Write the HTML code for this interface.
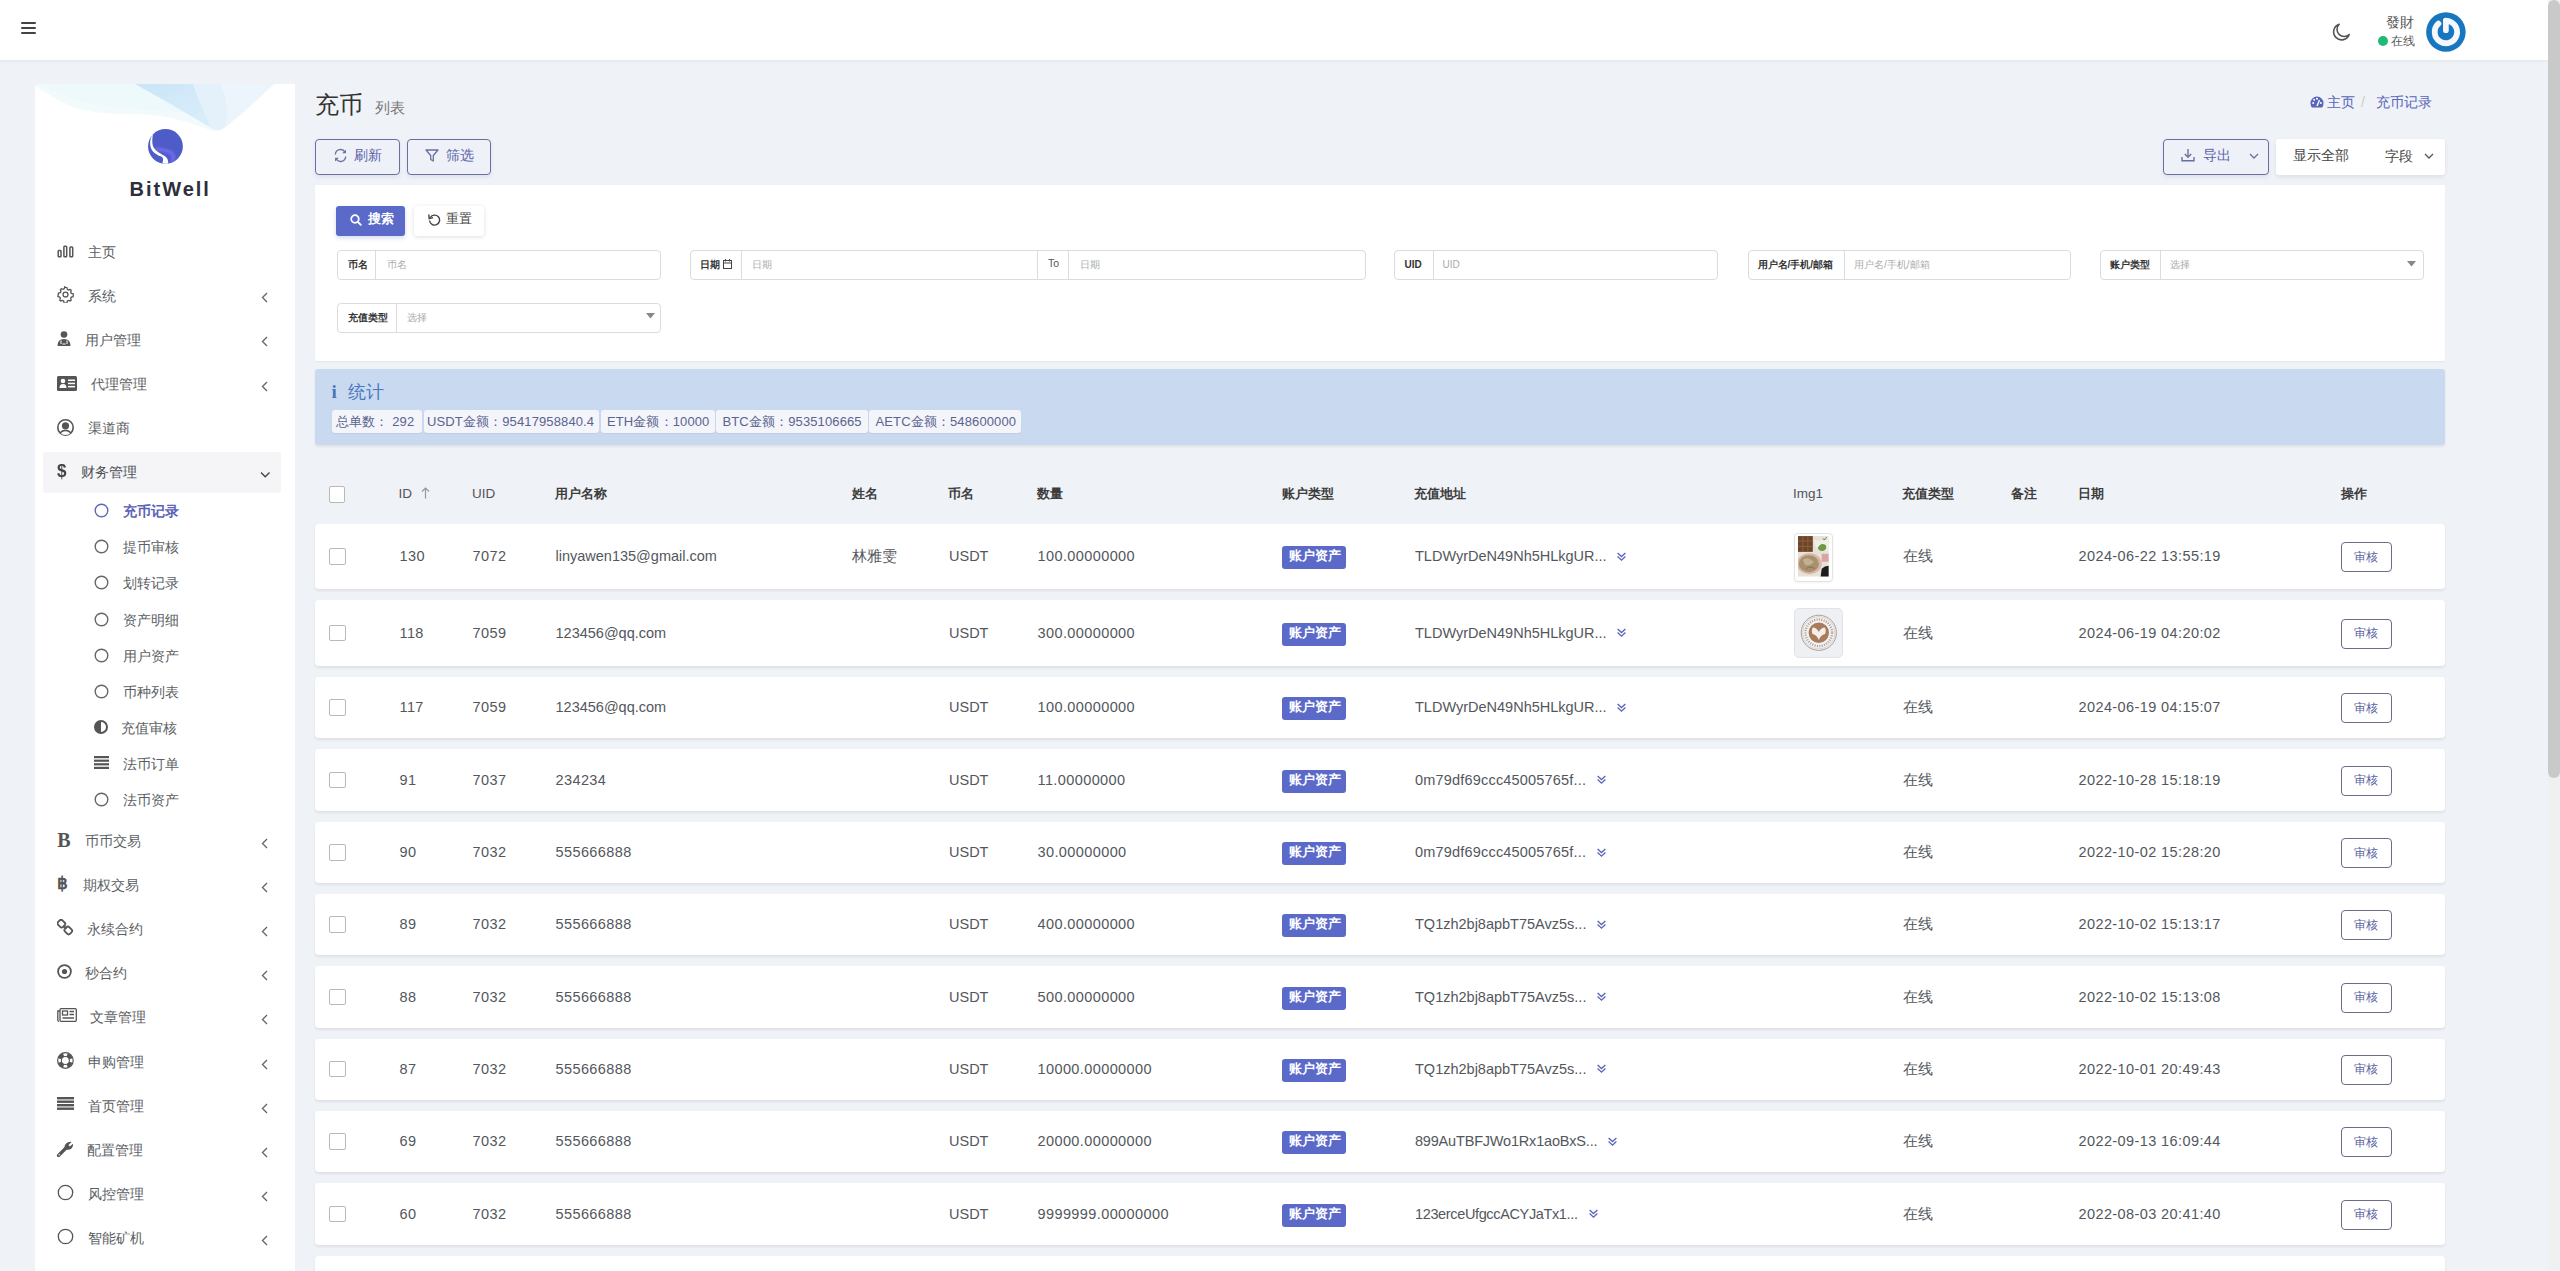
<!DOCTYPE html>
<html><head><meta charset="utf-8">
<style>
*{box-sizing:border-box;margin:0;padding:0}
html,body{width:2560px;height:1271px;overflow:hidden}
body{background:#eff2f7;font-family:"Liberation Sans",sans-serif;font-size:14px;color:#4b5057;position:relative}
.a{position:absolute;white-space:nowrap}
.nav{position:absolute;left:0;top:0;width:2548px;height:60px;background:#fff;box-shadow:0 1px 4px rgba(0,0,0,.06)}
.scroll{position:absolute;left:2548px;top:0;width:12px;height:1271px;background:#eff0ef}
.thumb{position:absolute;left:2548px;top:0;width:11.5px;height:778px;background:#c8c9c8;border-radius:6px}
.side{position:absolute;left:35px;top:84px;width:260px;height:1200px;background:#fff}
.mi{position:absolute;left:0;width:260px;height:20px;line-height:20px;font-size:14px;color:#5a5e63}
.mi .t{position:absolute;top:0}
.mi .ic{position:absolute;top:2px}
.chev{position:absolute;left:225px;top:5px;width:8px;height:8px;border-left:1.5px solid #666;border-bottom:1.5px solid #666;transform:rotate(45deg)}
</style></head><body>
<div class="nav"></div>
<div class="scroll"></div><div class="thumb"></div>
<!-- hamburger -->
<div class="a" style="left:21px;top:22px;width:15px;height:2px;background:#444;border-radius:1px"></div>
<div class="a" style="left:21px;top:27px;width:15px;height:2px;background:#444;border-radius:1px"></div>
<div class="a" style="left:21px;top:32px;width:15px;height:2px;background:#444;border-radius:1px"></div>

<div class="side"></div>
<svg class="a" style="left:35px;top:84px" width="260" height="50" viewBox="0 0 260 50">
<defs><linearGradient id="wb" x1="0" y1="0" x2="1" y2="1"><stop offset="0" stop-color="#c9e5f7"/><stop offset="1" stop-color="#dceefa"/></linearGradient></defs>
<path d="M0 0 L240 0 L188 45 Q180 48.5 172 45 Q135 30 95 30 Q55 30 35 22 Q12 10 0 2Z" fill="#f3fafc"/>
<path d="M4 0 L100 0 Q120 14 150 28 Q110 26 70 22 Q35 16 4 0Z" fill="#eaf7fa" opacity=".5"/>
<path d="M100 0 L158 0 Q166 22 177 44.5 Q140 22 100 0Z" fill="url(#wb)"/>
<path d="M158 0 L238 0 Q215 24 188 44.8 Q181 48 177 44.5 Q166 22 158 0Z" fill="#e4f1fa"/>
<path d="M185 0 L238 0 Q215 24 190 43 Q196 20 185 0Z" fill="#edf6fb" opacity=".8"/>
</svg>
<svg class="a" style="left:148px;top:129px" width="35" height="35" viewBox="0 0 35 35"><defs><filter id="lb" x="-50%" y="-50%" width="200%" height="200%"><feGaussianBlur stdDeviation=".9"/></filter><clipPath id="lc"><circle cx="17.45" cy="17.45" r="17.4"/></clipPath></defs><circle cx="17.45" cy="17.45" r="17.4" fill="#4d5cc6"/><g clip-path="url(#lc)"><path d="M8 19.5 Q15 21 21 22.5 Q25 24 25.5 28 Q25.5 31 24 34" fill="none" stroke="#6f6ae8" stroke-width="3.6" filter="url(#lb)"/><path d="M5.4 3.4 C2.4 8 1.6 13 2.5 17.5 C3.6 22.5 8 25.8 12.6 27.3 C14.6 28 15.4 29.6 15 31.2 L14.2 36 L20 36 C20.6 32.5 20 29.2 16.8 27 C11.5 24 6.4 21.6 4.8 16.5 C3.9 12.5 4.2 7.6 5.4 3.4Z" fill="#fff"/></g></svg>
<div class="a" style="left:129.5px;top:177.5px;font-size:20px;font-weight:bold;color:#2d2f3a;letter-spacing:2px">BitWell</div>
<svg class="a" style="left:57px;top:245px" width="17" height="13" viewBox="0 0 17 13"><g fill="none" stroke="#555" stroke-width="1.5"><rect x="1.2" y="5.5" width="2.8" height="6.3" rx=".8"/><rect x="6.9" y="1.3" width="2.8" height="10.5" rx=".8"/><rect x="12.9" y="2" width="2.8" height="9.8" rx=".8"/></g></svg>
<svg class="a" style="left:57px;top:286px" width="17" height="17" viewBox="0 0 24 24"><path fill="none" stroke="#555" stroke-width="1.8" d="M12 1.8l2 .3.6 2.6 1.6.9 2.5-.8 1.4 1.5-.8 2.5.9 1.6 2.6.6.3 2-.3 2-2.6.6-.9 1.6.8 2.5-1.4 1.4-2.5-.8-1.6.9-.6 2.6-2 .3-2-.3-.6-2.6-1.6-.9-2.5.8-1.4-1.4.8-2.5-.9-1.6-2.6-.6L1.8 12l.3-2 2.6-.6.9-1.6-.8-2.5 1.4-1.5 2.5.8 1.6-.9.6-2.6z"/><circle cx="12" cy="12" r="3.5" fill="none" stroke="#555" stroke-width="1.8"/></svg>
<svg class="a" style="left:57px;top:331px" width="14" height="15" viewBox="0 0 14 15"><circle cx="7" cy="3.5" r="3.3" fill="#555"/><path d="M0.5 15 Q0.5 8 7 8 Q13.5 8 13.5 15Z" fill="#555"/><path d="M4 9.5 L4 13 M10 9.5 L10 13 M5.5 13 L8.5 13" stroke="#fff" stroke-width="1" fill="none"/></svg>
<svg class="a" style="left:57px;top:376px" width="20" height="15" viewBox="0 0 20 15"><rect x="0" y="0" width="20" height="15" rx="1.5" fill="#555"/><circle cx="6" cy="5" r="2.3" fill="#fff"/><path d="M2.5 12 Q2.5 8 6 8 Q9.5 8 9.5 12Z" fill="#fff"/><rect x="11" y="3.5" width="7" height="1.5" fill="#fff"/><rect x="11" y="6.7" width="7" height="1.5" fill="#fff"/><rect x="11" y="9.9" width="7" height="1.5" fill="#fff"/></svg>
<svg class="a" style="left:57px;top:419px" width="17" height="17" viewBox="0 0 17 17"><defs><clipPath id="uc"><circle cx="8.5" cy="8.5" r="7.6"/></clipPath></defs><circle cx="8.5" cy="8.5" r="7.7" fill="none" stroke="#555" stroke-width="1.6"/><g clip-path="url(#uc)"><circle cx="8.5" cy="6.8" r="3.6" fill="#555"/><path d="M1.5 17 Q2.5 10.8 8.5 10.8 Q14.5 10.8 15.5 17Z" fill="#555"/><path d="M3 17 Q4 12.3 8.5 12.3 Q13 12.3 14 17Z" fill="#fff"/></g></svg>
<div class="a" style="left:88px;top:243px;font-size:14px;line-height:18px;color:#5a5e63;">主页</div>
<div class="a" style="left:88px;top:287px;font-size:14px;line-height:18px;color:#5a5e63;">系统</div>
<svg class="a" style="left:259.8px;top:292.2px" width="10" height="11" viewBox="0 0 10 11"><path d="M7 1 L2.5 5.5 L7 10" fill="none" stroke="#666" stroke-width="1.35"/></svg>
<div class="a" style="left:85px;top:331px;font-size:14px;line-height:18px;color:#5a5e63;">用户管理</div>
<svg class="a" style="left:259.8px;top:336.2px" width="10" height="11" viewBox="0 0 10 11"><path d="M7 1 L2.5 5.5 L7 10" fill="none" stroke="#666" stroke-width="1.35"/></svg>
<div class="a" style="left:91px;top:375px;font-size:14px;line-height:18px;color:#5a5e63;">代理管理</div>
<svg class="a" style="left:259.8px;top:381.2px" width="10" height="11" viewBox="0 0 10 11"><path d="M7 1 L2.5 5.5 L7 10" fill="none" stroke="#666" stroke-width="1.35"/></svg>
<div class="a" style="left:88px;top:419px;font-size:14px;line-height:18px;color:#5a5e63;">渠道商</div>
<div class="a" style="left:43px;top:452px;width:238px;height:41px;background:#f5f5f8;border-radius:3px"></div>
<div class="a" style="left:57px;top:459.5px;font-size:19px;font-weight:bold;color:#444;line-height:22px;transform:scaleX(.9);transform-origin:left">$</div>
<div class="a" style="left:81px;top:463px;font-size:14px;line-height:18px;color:#5a5e63;;color:#4a4e53">财务管理</div>
<svg class="a" style="left:259.5px;top:470.5px" width="11" height="8" viewBox="0 0 11 8"><path d="M1 1.5 L5.25 5.75 L9.5 1.5" fill="none" stroke="#444" stroke-width="1.4"/></svg>
<svg class="a" style="left:94px;top:503px" width="15" height="15" viewBox="0 0 15 15"><circle cx="7.5" cy="7.5" r="6.3" fill="none" stroke="#6068b8" stroke-width="1.4"/></svg>
<div class="a" style="left:123px;top:502px;font-size:14px;line-height:18px;color:#5a5e63;;color:#5a63b5;font-weight:bold">充币记录</div>
<svg class="a" style="left:94px;top:539px" width="15" height="15" viewBox="0 0 15 15"><circle cx="7.5" cy="7.5" r="6.3" fill="none" stroke="#666" stroke-width="1.4"/></svg>
<div class="a" style="left:123px;top:538px;font-size:14px;line-height:18px;color:#5a5e63;">提币审核</div>
<svg class="a" style="left:94px;top:575px" width="15" height="15" viewBox="0 0 15 15"><circle cx="7.5" cy="7.5" r="6.3" fill="none" stroke="#666" stroke-width="1.4"/></svg>
<div class="a" style="left:123px;top:574px;font-size:14px;line-height:18px;color:#5a5e63;">划转记录</div>
<svg class="a" style="left:94px;top:612px" width="15" height="15" viewBox="0 0 15 15"><circle cx="7.5" cy="7.5" r="6.3" fill="none" stroke="#666" stroke-width="1.4"/></svg>
<div class="a" style="left:123px;top:611px;font-size:14px;line-height:18px;color:#5a5e63;">资产明细</div>
<svg class="a" style="left:94px;top:648px" width="15" height="15" viewBox="0 0 15 15"><circle cx="7.5" cy="7.5" r="6.3" fill="none" stroke="#666" stroke-width="1.4"/></svg>
<div class="a" style="left:123px;top:647px;font-size:14px;line-height:18px;color:#5a5e63;">用户资产</div>
<svg class="a" style="left:94px;top:684px" width="15" height="15" viewBox="0 0 15 15"><circle cx="7.5" cy="7.5" r="6.3" fill="none" stroke="#666" stroke-width="1.4"/></svg>
<div class="a" style="left:123px;top:683px;font-size:14px;line-height:18px;color:#5a5e63;">币种列表</div>
<svg class="a" style="left:94px;top:720px" width="14" height="14" viewBox="0 0 14 14"><circle cx="7" cy="7" r="6" fill="none" stroke="#555" stroke-width="2"/><path d="M7 1 A6 6 0 0 0 7 13Z" fill="#555"/></svg>
<div class="a" style="left:121px;top:719px;font-size:14px;line-height:18px;color:#5a5e63;">充值审核</div>
<svg class="a" style="left:94px;top:756px" width="15" height="13" viewBox="0 0 15 13"><g fill="#555"><rect y="0" width="15" height="2.2"/><rect y="3.6" width="15" height="2.2"/><rect y="7.2" width="15" height="2.2"/><rect y="10.8" width="15" height="2.2"/></g></svg>
<div class="a" style="left:123px;top:755px;font-size:14px;line-height:18px;color:#5a5e63;">法币订单</div>
<svg class="a" style="left:94px;top:792px" width="15" height="15" viewBox="0 0 15 15"><circle cx="7.5" cy="7.5" r="6.3" fill="none" stroke="#666" stroke-width="1.4"/></svg>
<div class="a" style="left:123px;top:791px;font-size:14px;line-height:18px;color:#5a5e63;">法币资产</div>
<div class="a" style="left:85px;top:832px;font-size:14px;line-height:18px;color:#5a5e63;">币币交易</div>
<svg class="a" style="left:259.8px;top:838.2px" width="10" height="11" viewBox="0 0 10 11"><path d="M7 1 L2.5 5.5 L7 10" fill="none" stroke="#666" stroke-width="1.35"/></svg>
<div class="a" style="left:57.3px;top:829px;font-family:'Liberation Serif',serif;font-size:20px;font-weight:bold;color:#555;line-height:22px">B</div>
<div class="a" style="left:83px;top:876px;font-size:14px;line-height:18px;color:#5a5e63;">期权交易</div>
<svg class="a" style="left:259.8px;top:882.2px" width="10" height="11" viewBox="0 0 10 11"><path d="M7 1 L2.5 5.5 L7 10" fill="none" stroke="#666" stroke-width="1.35"/></svg>
<div class="a" style="left:57px;top:874px;font-size:17px;font-weight:bold;color:#555;line-height:20px">&#3647;</div>
<div class="a" style="left:87px;top:920px;font-size:14px;line-height:18px;color:#5a5e63;">永续合约</div>
<svg class="a" style="left:259.8px;top:926.2px" width="10" height="11" viewBox="0 0 10 11"><path d="M7 1 L2.5 5.5 L7 10" fill="none" stroke="#666" stroke-width="1.35"/></svg>
<svg class="a" style="left:57px;top:919px" width="17" height="17" viewBox="0 0 17 17"><g fill="none" stroke="#555" stroke-width="1.8"><rect x="-3.6" y="-3.1" width="7.2" height="6.2" rx="2.2" transform="translate(4.4 4.7) rotate(45)"/><rect x="-3.6" y="-3.1" width="7.2" height="6.2" rx="2.2" transform="translate(11.3 11.5) rotate(45)"/><path d="M6.2 6.5 L9.5 9.7"/></g></svg>
<div class="a" style="left:85px;top:964px;font-size:14px;line-height:18px;color:#5a5e63;">秒合约</div>
<svg class="a" style="left:259.8px;top:970.2px" width="10" height="11" viewBox="0 0 10 11"><path d="M7 1 L2.5 5.5 L7 10" fill="none" stroke="#666" stroke-width="1.35"/></svg>
<svg class="a" style="left:57px;top:964px" width="15" height="15" viewBox="0 0 15 15"><circle cx="7.5" cy="7.5" r="6.4" fill="none" stroke="#555" stroke-width="1.8"/><circle cx="7.5" cy="7.5" r="2.6" fill="#555"/></svg>
<div class="a" style="left:90px;top:1008px;font-size:14px;line-height:18px;color:#5a5e63;">文章管理</div>
<svg class="a" style="left:259.8px;top:1014.2px" width="10" height="11" viewBox="0 0 10 11"><path d="M7 1 L2.5 5.5 L7 10" fill="none" stroke="#666" stroke-width="1.35"/></svg>
<svg class="a" style="left:57px;top:1008px" width="20" height="14" viewBox="0 0 20 14"><g fill="none" stroke="#555" stroke-width="1.3"><rect x="3" y="0.7" width="16.3" height="12.6" rx="1"/><path d="M3 3 L0.8 3 L0.8 12 Q0.8 13.3 2 13.3"/><rect x="5.5" y="3" width="5" height="4"/><path d="M12.5 3.5h4.5M12.5 6.5h4.5M5.5 10h11.5"/></g></svg>
<div class="a" style="left:88px;top:1053px;font-size:14px;line-height:18px;color:#5a5e63;">申购管理</div>
<svg class="a" style="left:259.8px;top:1059.2px" width="10" height="11" viewBox="0 0 10 11"><path d="M7 1 L2.5 5.5 L7 10" fill="none" stroke="#666" stroke-width="1.35"/></svg>
<svg class="a" style="left:57px;top:1052px" width="17" height="17" viewBox="0 0 17 17"><g fill="none" stroke="#555"><circle cx="8.4" cy="8.5" r="7.8" stroke-width="1.2"/><circle cx="8.4" cy="8.5" r="4.0" stroke-width="1.1"/></g><path d="M15.63 10.85 A7.6 7.6 0 0 1 10.75 15.73 L9.64 12.30 A4.0 4.0 0 0 0 12.20 9.74Z M6.05 15.73 A7.6 7.6 0 0 1 1.17 10.85 L4.60 9.74 A4.0 4.0 0 0 0 7.16 12.30Z M1.17 6.15 A7.6 7.6 0 0 1 6.05 1.27 L7.16 4.70 A4.0 4.0 0 0 0 4.60 7.26Z M10.75 1.27 A7.6 7.6 0 0 1 15.63 6.15 L12.20 7.26 A4.0 4.0 0 0 0 9.64 4.70Z " fill="#555"/></svg>
<div class="a" style="left:88px;top:1097px;font-size:14px;line-height:18px;color:#5a5e63;">首页管理</div>
<svg class="a" style="left:259.8px;top:1103.2px" width="10" height="11" viewBox="0 0 10 11"><path d="M7 1 L2.5 5.5 L7 10" fill="none" stroke="#666" stroke-width="1.35"/></svg>
<svg class="a" style="left:57px;top:1097px" width="17" height="13" viewBox="0 0 17 13"><g fill="#555"><rect y="0" width="17" height="2.4"/><rect y="3.5" width="17" height="2.4"/><rect y="7" width="17" height="2.4"/><rect y="10.5" width="17" height="2.4"/></g></svg>
<div class="a" style="left:87px;top:1141px;font-size:14px;line-height:18px;color:#5a5e63;">配置管理</div>
<svg class="a" style="left:259.8px;top:1147.2px" width="10" height="11" viewBox="0 0 10 11"><path d="M7 1 L2.5 5.5 L7 10" fill="none" stroke="#666" stroke-width="1.35"/></svg>
<svg class="a" style="left:57px;top:1141px" width="17" height="16" viewBox="0 0 17 16"><path d="M1.5 14.5 L9 7" stroke="#555" stroke-width="3.2" stroke-linecap="round"/><path d="M8 8 Q6.5 3.5 10.5 1.5 Q13 0.5 14.5 1 L11.5 4 L12.8 5.5 L16 2.8 Q16.6 5.5 14.5 7.5 Q12 9.5 9.5 8.5Z" fill="#555"/><circle cx="2.2" cy="13.8" r=".7" fill="#fff"/></svg>
<div class="a" style="left:88px;top:1185px;font-size:14px;line-height:18px;color:#5a5e63;">风控管理</div>
<svg class="a" style="left:259.8px;top:1191.2px" width="10" height="11" viewBox="0 0 10 11"><path d="M7 1 L2.5 5.5 L7 10" fill="none" stroke="#666" stroke-width="1.35"/></svg>
<svg class="a" style="left:57px;top:1184px" width="17" height="17" viewBox="0 0 17 17"><circle cx="8.5" cy="8.5" r="7.2" fill="none" stroke="#555" stroke-width="1.3"/></svg>
<div class="a" style="left:88px;top:1229px;font-size:14px;line-height:18px;color:#5a5e63;">智能矿机</div>
<svg class="a" style="left:259.8px;top:1235.2px" width="10" height="11" viewBox="0 0 10 11"><path d="M7 1 L2.5 5.5 L7 10" fill="none" stroke="#666" stroke-width="1.35"/></svg>
<svg class="a" style="left:57px;top:1228px" width="17" height="17" viewBox="0 0 17 17"><circle cx="8.5" cy="8.5" r="7.2" fill="none" stroke="#555" stroke-width="1.3"/></svg>
<svg class="a" style="left:2331px;top:22px" width="20" height="20" viewBox="0 0 20 20"><path d="M8.2 2.2 A8 8 0 1 0 18.2 12.5 A6.6 6.6 0 0 1 8.2 2.2Z" fill="none" stroke="#555" stroke-width="1.6" stroke-linejoin="round"/></svg>
<div class="a" style="left:2386px;top:13px;font-size:14px;line-height:18px;color:#555">發財</div>
<div class="a" style="left:2378px;top:35.6px;width:10px;height:10px;border-radius:50%;background:#21b978"></div>
<div class="a" style="left:2391px;top:32.5px;font-size:12px;line-height:16px;color:#555">在线</div>
<svg class="a" style="left:2426px;top:12px" width="40" height="40" viewBox="0 0 40 40"><circle cx="19.9" cy="20" r="19.75" fill="#1776bd"/><path d="M12.41 11.68 A11.2 11.2 0 1 0 19.90 8.80" fill="none" stroke="#f4f8fc" stroke-width="5.8" stroke-linecap="round"/><path d="M19.9 8.5 L19.9 18.2" stroke="#f4f8fc" stroke-width="5.7" stroke-linecap="round"/></svg>
<div class="a" style="left:315px;top:90px;font-size:23.5px;line-height:30px;color:#333">充币</div>
<div class="a" style="left:375px;top:98px;font-size:15px;line-height:20px;color:#777">列表</div>
<svg class="a" style="left:2310px;top:96px" width="14" height="12" viewBox="0 0 14 12"><path d="M7 0.5 A6.5 6.5 0 0 0 0.5 7 Q0.5 10 2 11.5 L12 11.5 Q13.5 10 13.5 7 A6.5 6.5 0 0 0 7 0.5Z" fill="#5865b8"/><circle cx="3.2" cy="7" r="1" fill="#fff"/><circle cx="4.2" cy="3.8" r="1" fill="#fff"/><circle cx="7" cy="2.8" r="1" fill="#fff"/><circle cx="10.8" cy="7" r="1" fill="#fff"/><path d="M7 10 L9.5 4" stroke="#fff" stroke-width="1.4"/></svg>
<div class="a" style="left:2327px;top:93px;font-size:14px;line-height:18px;color:#5865b8">主页</div>
<div class="a" style="left:2361px;top:93px;font-size:14px;line-height:18px;color:#ccc">/</div>
<div class="a" style="left:2376px;top:93px;font-size:14px;line-height:18px;color:#5865b8">充币记录</div>
<div class="a" style="left:315px;top:139px;width:85px;height:35.5px;border:1.4px solid #6a6f9e;border-radius:4px;background:#eef1f8;box-shadow:0 2px 4px rgba(88,101,184,.12)"></div><svg class="a" style="left:333px;top:148px" width="15" height="15" viewBox="0 0 16 16"><g fill="none" stroke="#6a6f9e" stroke-width="1.4"><path d="M2.5 7 A5.5 5.5 0 0 1 12.8 4.5"/><path d="M13.5 9 A5.5 5.5 0 0 1 3.2 11.5"/></g><path d="M13.8 1.5 L13.8 5.5 L9.8 5.5Z" fill="#6a6f9e"/><path d="M2.2 14.5 L2.2 10.5 L6.2 10.5Z" fill="#6a6f9e"/></svg><div class="a" style="left:354px;top:146px;font-size:14px;line-height:18px;color:#5b63a8">刷新</div>
<div class="a" style="left:407px;top:139px;width:84px;height:35.5px;border:1.4px solid #6a6f9e;border-radius:4px;background:#eef1f8;box-shadow:0 2px 4px rgba(88,101,184,.12)"></div><svg class="a" style="left:425px;top:149px" width="14" height="13" viewBox="0 0 14 13"><path d="M1 1 L13 1 L8.3 6.5 L8.3 12 L5.7 10.5 L5.7 6.5Z" fill="none" stroke="#6a6f9e" stroke-width="1.3" stroke-linejoin="round"/></svg><div class="a" style="left:446px;top:146px;font-size:14px;line-height:18px;color:#5b63a8">筛选</div>
<div class="a" style="left:2163px;top:139px;width:106px;height:35.5px;border:1.4px solid #6a6f9e;border-radius:4px;background:#eef1f8;box-shadow:0 2px 4px rgba(88,101,184,.12)"></div>
<svg class="a" style="left:2181px;top:148px" width="14" height="14" viewBox="0 0 14 14"><g fill="none" stroke="#6a6f9e" stroke-width="1.4"><path d="M7 1 L7 9"/><path d="M3.8 6 L7 9.2 L10.2 6"/><path d="M1 9 L1 12.8 L13 12.8 L13 9"/></g></svg>
<div class="a" style="left:2203px;top:146px;font-size:14px;line-height:18px;color:#5b63a8">导出</div>
<svg class="a" style="left:2249px;top:153px" width="10" height="7" viewBox="0 0 10 7"><path d="M1 1 L5 5 L9 1" fill="none" stroke="#6a6f9e" stroke-width="1.3"/></svg>
<div class="a" style="left:2276px;top:139px;width:169px;height:35.5px;background:#fff;border-radius:3px;box-shadow:0 2px 4px rgba(0,0,0,.08)"></div>
<div class="a" style="left:2293px;top:146px;font-size:14px;line-height:18px;color:#444">显示全部</div>
<div class="a" style="left:2385px;top:147px;font-size:14px;line-height:18px;color:#444">字段</div>
<svg class="a" style="left:2424px;top:153px" width="10" height="7" viewBox="0 0 10 7"><path d="M1 1 L5 5 L9 1" fill="none" stroke="#555" stroke-width="1.3"/></svg>
<div class="a" style="left:315px;top:184.5px;width:2130px;height:176px;background:#fff;border-radius:1px;box-shadow:0 1px 2px rgba(0,0,0,.05)"></div>
<div class="a" style="left:336px;top:206px;width:69px;height:30px;background:#5b6ac9;border-radius:3px;box-shadow:0 2px 4px rgba(91,106,201,.25)"></div>
<svg class="a" style="left:349.5px;top:213.5px" width="12" height="12" viewBox="0 0 12 12"><circle cx="5" cy="5" r="3.8" fill="none" stroke="#fff" stroke-width="1.7"/><path d="M7.8 7.8 L10.8 10.8" stroke="#fff" stroke-width="1.9" stroke-linecap="round"/></svg>
<div class="a" style="left:367.5px;top:211px;font-size:12.5px;line-height:17px;color:#fff;font-weight:bold">搜索</div>
<div class="a" style="left:414px;top:206px;width:70px;height:30px;background:#fff;border-radius:3px;box-shadow:0 1px 4px rgba(0,0,0,.13)"></div>
<svg class="a" style="left:427.5px;top:213px" width="13" height="13" viewBox="0 0 13 13"><path d="M2.3 4.5 A5 5 0 1 1 1.6 7.5" fill="none" stroke="#444" stroke-width="1.4"/><path d="M0.8 1.5 L1.2 5.6 L5 4.6" fill="none" stroke="#444" stroke-width="1.4"/></svg>
<div class="a" style="left:446px;top:211px;font-size:12.5px;line-height:17px;color:#444">重置</div>
<div class="a" style="left:336.5px;top:250px;width:324.0px;height:30px;border:1px solid #dcdcdc;border-radius:4px;background:#fff"></div><div class="a" style="left:375px;top:250px;width:1px;height:30px;background:#dcdcdc"></div><div class="a" style="left:347.5px;top:257px;font-size:10px;line-height:16px;color:#333;font-weight:bold">币名</div><div class="a" style="left:387px;top:257px;font-size:10px;line-height:16px;color:#aaa">币名</div>
<div class="a" style="left:689.5px;top:250px;width:676.0px;height:30px;border:1px solid #dcdcdc;border-radius:4px;background:#fff"></div><div class="a" style="left:741px;top:250px;width:1px;height:30px;background:#dcdcdc"></div><div class="a" style="left:700px;top:257px;font-size:10px;line-height:16px;color:#333;font-weight:bold">日期</div><div class="a" style="left:752px;top:257px;font-size:10px;line-height:16px;color:#aaa">日期</div>
<svg class="a" style="left:722.5px;top:259px" width="9" height="10" viewBox="0 0 9 10"><g fill="none" stroke="#444" stroke-width="1"><rect x="0.5" y="1.5" width="8" height="8"/><path d="M0.5 4h8M2.5 0v2.5M6.5 0v2.5"/></g></svg>
<div class="a" style="left:1037px;top:250px;width:1px;height:30px;background:#dcdcdc"></div><div class="a" style="left:1068px;top:250px;width:1px;height:30px;background:#dcdcdc"></div>
<div class="a" style="left:1048px;top:256px;font-size:10.5px;line-height:14px;color:#555">To</div>
<div class="a" style="left:1080px;top:257px;font-size:10px;line-height:16px;color:#aaa">日期</div>
<div class="a" style="left:1394px;top:250px;width:324px;height:30px;border:1px solid #dcdcdc;border-radius:4px;background:#fff"></div><div class="a" style="left:1432.5px;top:250px;width:1px;height:30px;background:#dcdcdc"></div><div class="a" style="left:1404.5px;top:257px;font-size:10px;line-height:16px;color:#333;font-weight:bold">UID</div><div class="a" style="left:1442.5px;top:257px;font-size:10px;line-height:16px;color:#aaa">UID</div>
<div class="a" style="left:1747.5px;top:250px;width:323.0px;height:30px;border:1px solid #dcdcdc;border-radius:4px;background:#fff"></div><div class="a" style="left:1843.5px;top:250px;width:1px;height:30px;background:#dcdcdc"></div><div class="a" style="left:1757.5px;top:257px;font-size:10px;line-height:16px;color:#333;font-weight:bold">用户名/手机/邮箱</div><div class="a" style="left:1854px;top:257px;font-size:10px;line-height:16px;color:#aaa">用户名/手机/邮箱</div>
<div class="a" style="left:2099.5px;top:250px;width:324.0px;height:30px;border:1px solid #dcdcdc;border-radius:4px;background:#fff"></div><div class="a" style="left:2159.5px;top:250px;width:1px;height:30px;background:#dcdcdc"></div><div class="a" style="left:2110px;top:257px;font-size:10px;line-height:16px;color:#333;font-weight:bold">账户类型</div><div class="a" style="left:2170px;top:257px;font-size:10px;line-height:16px;color:#aaa">选择</div><svg class="a" style="left:2407px;top:260.5px" width="9" height="6" viewBox="0 0 9 6"><path d="M0 0 L9 0 L4.5 5.5Z" fill="#888"/></svg>
<div class="a" style="left:336.5px;top:302.5px;width:324.0px;height:30px;border:1px solid #dcdcdc;border-radius:4px;background:#fff"></div><div class="a" style="left:395.5px;top:302.5px;width:1px;height:30px;background:#dcdcdc"></div><div class="a" style="left:347.5px;top:309.5px;font-size:10px;line-height:16px;color:#333;font-weight:bold">充值类型</div><div class="a" style="left:406.5px;top:309.5px;font-size:10px;line-height:16px;color:#aaa">选择</div><svg class="a" style="left:645.5px;top:313px" width="9" height="6" viewBox="0 0 9 6"><path d="M0 0 L9 0 L4.5 5.5Z" fill="#888"/></svg>
<div class="a" style="left:315px;top:369px;width:2130px;height:76px;background:#c9daf0;border-radius:3px;box-shadow:0 2px 3px rgba(0,0,0,.07)"></div>
<div class="a" style="left:331.5px;top:382px;font-family:'Liberation Serif',serif;font-size:19px;line-height:20px;color:#4a74b8;font-weight:bold">i</div>
<div class="a" style="left:348px;top:380.5px;font-size:18px;line-height:22px;color:#4a78c0">统计</div>
<div class="a" style="left:332px;top:410px;width:90px;height:23px;background:#f3f5fa;border-radius:3px;box-shadow:0 1px 1px rgba(0,0,0,.06)"></div>
<div class="a" style="left:336px;top:413px;font-size:13px;line-height:17px;color:#5b6390;letter-spacing:.12px">总单数：&nbsp;292</div>
<div class="a" style="left:423.5px;top:410px;width:175.5px;height:23px;background:#f3f5fa;border-radius:3px;box-shadow:0 1px 1px rgba(0,0,0,.06)"></div>
<div class="a" style="left:427px;top:413px;font-size:13px;line-height:17px;color:#5b6390;letter-spacing:.12px">USDT金额：95417958840.4</div>
<div class="a" style="left:600.5px;top:410px;width:114.5px;height:23px;background:#f3f5fa;border-radius:3px;box-shadow:0 1px 1px rgba(0,0,0,.06)"></div>
<div class="a" style="left:607px;top:413px;font-size:13px;line-height:17px;color:#5b6390;letter-spacing:.12px">ETH金额：10000</div>
<div class="a" style="left:716px;top:410px;width:151.5px;height:23px;background:#f3f5fa;border-radius:3px;box-shadow:0 1px 1px rgba(0,0,0,.06)"></div>
<div class="a" style="left:722.5px;top:413px;font-size:13px;line-height:17px;color:#5b6390;letter-spacing:.12px">BTC金额：9535106665</div>
<div class="a" style="left:869px;top:410px;width:151.5px;height:23px;background:#f3f5fa;border-radius:3px;box-shadow:0 1px 1px rgba(0,0,0,.06)"></div>
<div class="a" style="left:875.5px;top:413px;font-size:13px;line-height:17px;color:#5b6390;letter-spacing:.12px">AETC金额：548600000</div>
<div class="a" style="left:328.5px;top:486px;width:16.5px;height:16.5px;border:1.8px solid #b8b8b8;border-radius:2px;background:#fff"></div>
<div class="a" style="left:398.5px;top:484.5px;font-size:13.5px;line-height:17px;color:#555;">ID</div>
<svg class="a" style="left:420.5px;top:487px" width="9" height="12" viewBox="0 0 9 12"><path d="M4.5 11.5 L4.5 1 M1 4.5 L4.5 1 L8 4.5" fill="none" stroke="#999" stroke-width="1.2"/></svg>
<div class="a" style="left:472px;top:484.5px;font-size:13.5px;line-height:17px;color:#555;">UID</div>
<div class="a" style="left:555px;top:484.5px;font-size:13px;line-height:17px;color:#3d3d3d;font-weight:bold">用户名称</div>
<div class="a" style="left:851.5px;top:484.5px;font-size:13px;line-height:17px;color:#3d3d3d;font-weight:bold">姓名</div>
<div class="a" style="left:948px;top:484.5px;font-size:13px;line-height:17px;color:#3d3d3d;font-weight:bold">币名</div>
<div class="a" style="left:1036.5px;top:484.5px;font-size:13px;line-height:17px;color:#3d3d3d;font-weight:bold">数量</div>
<div class="a" style="left:1282px;top:484.5px;font-size:13px;line-height:17px;color:#3d3d3d;font-weight:bold">账户类型</div>
<div class="a" style="left:1414px;top:484.5px;font-size:13px;line-height:17px;color:#3d3d3d;font-weight:bold">充值地址</div>
<div class="a" style="left:1902px;top:484.5px;font-size:13px;line-height:17px;color:#3d3d3d;font-weight:bold">充值类型</div>
<div class="a" style="left:2010.5px;top:484.5px;font-size:13px;line-height:17px;color:#3d3d3d;font-weight:bold">备注</div>
<div class="a" style="left:2078px;top:484.5px;font-size:13px;line-height:17px;color:#3d3d3d;font-weight:bold">日期</div>
<div class="a" style="left:2340.5px;top:484.5px;font-size:13px;line-height:17px;color:#3d3d3d;font-weight:bold">操作</div>
<div class="a" style="left:1793px;top:484.5px;font-size:13.5px;line-height:17px;color:#555;">Img1</div>
<div class="a row" style="left:315px;top:524px;width:2130px;height:65px;background:#fff;border-radius:4px;box-shadow:0 2px 3px rgba(0,0,0,.075)"></div>
<div class="a" style="left:329px;top:548.0px;width:16.5px;height:16.5px;border:1.8px solid #b8b8b8;border-radius:2px;background:#fff"></div>
<div class="a" style="left:399.5px;top:547.0px;font-size:14.5px;line-height:18px;color:#53575d;letter-spacing:0.4px;">130</div>
<div class="a" style="left:472.5px;top:547.0px;font-size:14.5px;line-height:18px;color:#53575d;letter-spacing:0.4px;">7072</div>
<div class="a" style="left:555.5px;top:547.0px;font-size:14.5px;line-height:18px;color:#53575d;">linyawen135@gmail.com</div>
<div class="a" style="left:851.5px;top:547.0px;font-size:14.5px;line-height:18px;color:#53575d;">林雅雯</div>
<div class="a" style="left:949px;top:547.0px;font-size:14.5px;line-height:18px;color:#53575d;">USDT</div>
<div class="a" style="left:1037.5px;top:547.0px;font-size:14.5px;line-height:18px;color:#53575d;letter-spacing:0.4px;">100.00000000</div>
<div class="a" style="left:1282px;top:546.0px;width:64px;height:23px;background:#5b6ac9;border-radius:3px"></div>
<div class="a" style="left:1288.5px;top:548.0px;font-size:12.5px;line-height:17px;color:#fff;font-weight:bold">账户资产</div>
<div class="a" style="left:1415px;top:547.0px;font-size:14.5px;line-height:18px;color:#53575d;">TLDWyrDeN49Nh5HLkgUR...</div>
<div class="a" style="left:1902.5px;top:547.0px;font-size:14.5px;line-height:18px;color:#53575d;">在线</div>
<div class="a" style="left:2078.5px;top:547.0px;font-size:14.5px;line-height:18px;color:#53575d;letter-spacing:0.4px;">2024-06-22 13:55:19</div>
<div class="a" style="left:2341px;top:542.0px;width:51px;height:30px;border:1.3px solid #6b6b8a;border-radius:4px;background:#fff"></div>
<div class="a" style="left:2354px;top:548.5px;font-size:12px;line-height:16px;color:#5b5fa0">审核</div>
<div class="a" style="left:1794px;top:532.5px;width:39px;height:49px;border:1px solid #e3e3e3;border-radius:4px;background:#fff;box-shadow:0 1px 2px rgba(0,0,0,.05)"></div>
<svg class="a" style="left:1798px;top:536.3px" width="30.6" height="40.6" viewBox="0 0 31 41"><rect width="31" height="41" fill="#e6e2da"/><rect x="0" y="0" width="15" height="16" fill="#6e4526"/><path d="M0 5h15M0 10.5h15M5 0v16M10 0v16" stroke="#8b6240" stroke-width="1"/><path d="M16 4 Q22 6 27 2 L31 0 L31 14 Q26 16 21 14 Q17 11 16 4Z" fill="#eef0e8"/><path d="M20 12 Q23 6 28 9 Q30 13 26 15 Q22 16 20 12Z" fill="#6f9a45"/><path d="M25 3 Q28 5 29 1" stroke="#5c7a40" stroke-width="1" fill="none"/><ellipse cx="11.5" cy="28" rx="12.5" ry="10.6" fill="#dcb4a4"/><ellipse cx="11" cy="28" rx="10.2" ry="8.6" fill="#a79270"/><path d="M5 24 Q10 20 16 26 Q12 31 7 29Z" fill="#c3b08e"/><path d="M8 33 Q13 30 17 33" stroke="#8a7556" stroke-width="1.2" fill="none"/><rect x="24" y="18" width="7" height="8" fill="#dba4a0"/><path d="M23 41 L24 33 Q27 30 31 30 L31 41Z" fill="#1c1c1c"/></svg>
<svg class="a chev2" style="left:1617px;top:551.5px" width="9" height="10" viewBox="0 0 9 10"><path d="M0.6 1 L4.5 4.6 L8.4 1 M0.6 4.6 L4.5 8.2 L8.4 4.6" fill="none" stroke="#5865b8" stroke-width="1.3"/></svg>
<div class="a row" style="left:315px;top:600px;width:2130px;height:66px;background:#fff;border-radius:4px;box-shadow:0 2px 3px rgba(0,0,0,.075)"></div>
<div class="a" style="left:329px;top:624.5px;width:16.5px;height:16.5px;border:1.8px solid #b8b8b8;border-radius:2px;background:#fff"></div>
<div class="a" style="left:399.5px;top:623.5px;font-size:14.5px;line-height:18px;color:#53575d;letter-spacing:0.4px;">118</div>
<div class="a" style="left:472.5px;top:623.5px;font-size:14.5px;line-height:18px;color:#53575d;letter-spacing:0.4px;">7059</div>
<div class="a" style="left:555.5px;top:623.5px;font-size:14.5px;line-height:18px;color:#53575d;">123456@qq.com</div>
<div class="a" style="left:949px;top:623.5px;font-size:14.5px;line-height:18px;color:#53575d;">USDT</div>
<div class="a" style="left:1037.5px;top:623.5px;font-size:14.5px;line-height:18px;color:#53575d;letter-spacing:0.4px;">300.00000000</div>
<div class="a" style="left:1282px;top:622.5px;width:64px;height:23px;background:#5b6ac9;border-radius:3px"></div>
<div class="a" style="left:1288.5px;top:624.5px;font-size:12.5px;line-height:17px;color:#fff;font-weight:bold">账户资产</div>
<div class="a" style="left:1415px;top:623.5px;font-size:14.5px;line-height:18px;color:#53575d;">TLDWyrDeN49Nh5HLkgUR...</div>
<div class="a" style="left:1902.5px;top:623.5px;font-size:14.5px;line-height:18px;color:#53575d;">在线</div>
<div class="a" style="left:2078.5px;top:623.5px;font-size:14.5px;line-height:18px;color:#53575d;letter-spacing:0.4px;">2024-06-19 04:20:02</div>
<div class="a" style="left:2341px;top:618.5px;width:51px;height:30px;border:1.3px solid #6b6b8a;border-radius:4px;background:#fff"></div>
<div class="a" style="left:2354px;top:625.0px;font-size:12px;line-height:16px;color:#5b5fa0">审核</div>
<div class="a" style="left:1794px;top:608px;width:49px;height:49.5px;border:1px solid #e1e3e8;border-radius:5px;background:#eef0f4"></div>
<svg class="a" style="left:1799px;top:613px" width="40" height="40" viewBox="0 0 40 40"><circle cx="19.8" cy="19.8" r="17.6" fill="#f4f2f1" stroke="#a9a09c" stroke-width="1"/><circle cx="19.8" cy="19.8" r="16.2" fill="none" stroke="#c6bdb8" stroke-width=".6"/><circle cx="19.8" cy="19.8" r="13.3" fill="none" stroke="#9c8f88" stroke-width="2.4" stroke-dasharray="1.1 1.3" opacity=".8"/><circle cx="19.8" cy="19.8" r="10.2" fill="#a97b5e"/><path d="M19.8 27 Q18 22 13.5 21 Q12 17 14 14.5 Q17.5 14.5 19.8 19 Q22 14.5 25.6 14.5 Q27.6 17 26.1 21 Q21.6 22 19.8 27Z" fill="#f6efe9"/></svg>
<svg class="a chev2" style="left:1617px;top:628.0px" width="9" height="10" viewBox="0 0 9 10"><path d="M0.6 1 L4.5 4.6 L8.4 1 M0.6 4.6 L4.5 8.2 L8.4 4.6" fill="none" stroke="#5865b8" stroke-width="1.3"/></svg>
<div class="a row" style="left:315px;top:677px;width:2130px;height:61px;background:#fff;border-radius:4px;box-shadow:0 2px 3px rgba(0,0,0,.075)"></div>
<div class="a" style="left:329px;top:699.0px;width:16.5px;height:16.5px;border:1.8px solid #b8b8b8;border-radius:2px;background:#fff"></div>
<div class="a" style="left:399.5px;top:698.0px;font-size:14.5px;line-height:18px;color:#53575d;letter-spacing:0.4px;">117</div>
<div class="a" style="left:472.5px;top:698.0px;font-size:14.5px;line-height:18px;color:#53575d;letter-spacing:0.4px;">7059</div>
<div class="a" style="left:555.5px;top:698.0px;font-size:14.5px;line-height:18px;color:#53575d;">123456@qq.com</div>
<div class="a" style="left:949px;top:698.0px;font-size:14.5px;line-height:18px;color:#53575d;">USDT</div>
<div class="a" style="left:1037.5px;top:698.0px;font-size:14.5px;line-height:18px;color:#53575d;letter-spacing:0.4px;">100.00000000</div>
<div class="a" style="left:1282px;top:697.0px;width:64px;height:23px;background:#5b6ac9;border-radius:3px"></div>
<div class="a" style="left:1288.5px;top:699.0px;font-size:12.5px;line-height:17px;color:#fff;font-weight:bold">账户资产</div>
<div class="a" style="left:1415px;top:698.0px;font-size:14.5px;line-height:18px;color:#53575d;">TLDWyrDeN49Nh5HLkgUR...</div>
<div class="a" style="left:1902.5px;top:698.0px;font-size:14.5px;line-height:18px;color:#53575d;">在线</div>
<div class="a" style="left:2078.5px;top:698.0px;font-size:14.5px;line-height:18px;color:#53575d;letter-spacing:0.4px;">2024-06-19 04:15:07</div>
<div class="a" style="left:2341px;top:693.0px;width:51px;height:30px;border:1.3px solid #6b6b8a;border-radius:4px;background:#fff"></div>
<div class="a" style="left:2354px;top:699.5px;font-size:12px;line-height:16px;color:#5b5fa0">审核</div>
<svg class="a chev2" style="left:1617px;top:702.5px" width="9" height="10" viewBox="0 0 9 10"><path d="M0.6 1 L4.5 4.6 L8.4 1 M0.6 4.6 L4.5 8.2 L8.4 4.6" fill="none" stroke="#5865b8" stroke-width="1.3"/></svg>
<div class="a row" style="left:315px;top:749px;width:2130px;height:62px;background:#fff;border-radius:4px;box-shadow:0 2px 3px rgba(0,0,0,.075)"></div>
<div class="a" style="left:329px;top:771.5px;width:16.5px;height:16.5px;border:1.8px solid #b8b8b8;border-radius:2px;background:#fff"></div>
<div class="a" style="left:399.5px;top:770.5px;font-size:14.5px;line-height:18px;color:#53575d;letter-spacing:0.4px;">91</div>
<div class="a" style="left:472.5px;top:770.5px;font-size:14.5px;line-height:18px;color:#53575d;letter-spacing:0.4px;">7037</div>
<div class="a" style="left:555.5px;top:770.5px;font-size:14.5px;line-height:18px;color:#53575d;letter-spacing:0.4px;">234234</div>
<div class="a" style="left:949px;top:770.5px;font-size:14.5px;line-height:18px;color:#53575d;">USDT</div>
<div class="a" style="left:1037.5px;top:770.5px;font-size:14.5px;line-height:18px;color:#53575d;letter-spacing:0.4px;">11.00000000</div>
<div class="a" style="left:1282px;top:769.5px;width:64px;height:23px;background:#5b6ac9;border-radius:3px"></div>
<div class="a" style="left:1288.5px;top:771.5px;font-size:12.5px;line-height:17px;color:#fff;font-weight:bold">账户资产</div>
<div class="a" style="left:1415px;top:770.5px;font-size:14.5px;line-height:18px;color:#53575d;letter-spacing:0.19px;">0m79df69ccc45005765f...</div>
<div class="a" style="left:1902.5px;top:770.5px;font-size:14.5px;line-height:18px;color:#53575d;">在线</div>
<div class="a" style="left:2078.5px;top:770.5px;font-size:14.5px;line-height:18px;color:#53575d;letter-spacing:0.4px;">2022-10-28 15:18:19</div>
<div class="a" style="left:2341px;top:765.5px;width:51px;height:30px;border:1.3px solid #6b6b8a;border-radius:4px;background:#fff"></div>
<div class="a" style="left:2354px;top:772.0px;font-size:12px;line-height:16px;color:#5b5fa0">审核</div>
<svg class="a chev2" style="left:1597px;top:775.0px" width="9" height="10" viewBox="0 0 9 10"><path d="M0.6 1 L4.5 4.6 L8.4 1 M0.6 4.6 L4.5 8.2 L8.4 4.6" fill="none" stroke="#5865b8" stroke-width="1.3"/></svg>
<div class="a row" style="left:315px;top:822px;width:2130px;height:61px;background:#fff;border-radius:4px;box-shadow:0 2px 3px rgba(0,0,0,.075)"></div>
<div class="a" style="left:329px;top:844.0px;width:16.5px;height:16.5px;border:1.8px solid #b8b8b8;border-radius:2px;background:#fff"></div>
<div class="a" style="left:399.5px;top:843.0px;font-size:14.5px;line-height:18px;color:#53575d;letter-spacing:0.4px;">90</div>
<div class="a" style="left:472.5px;top:843.0px;font-size:14.5px;line-height:18px;color:#53575d;letter-spacing:0.4px;">7032</div>
<div class="a" style="left:555.5px;top:843.0px;font-size:14.5px;line-height:18px;color:#53575d;letter-spacing:0.4px;">555666888</div>
<div class="a" style="left:949px;top:843.0px;font-size:14.5px;line-height:18px;color:#53575d;">USDT</div>
<div class="a" style="left:1037.5px;top:843.0px;font-size:14.5px;line-height:18px;color:#53575d;letter-spacing:0.4px;">30.00000000</div>
<div class="a" style="left:1282px;top:842.0px;width:64px;height:23px;background:#5b6ac9;border-radius:3px"></div>
<div class="a" style="left:1288.5px;top:844.0px;font-size:12.5px;line-height:17px;color:#fff;font-weight:bold">账户资产</div>
<div class="a" style="left:1415px;top:843.0px;font-size:14.5px;line-height:18px;color:#53575d;letter-spacing:0.19px;">0m79df69ccc45005765f...</div>
<div class="a" style="left:1902.5px;top:843.0px;font-size:14.5px;line-height:18px;color:#53575d;">在线</div>
<div class="a" style="left:2078.5px;top:843.0px;font-size:14.5px;line-height:18px;color:#53575d;letter-spacing:0.4px;">2022-10-02 15:28:20</div>
<div class="a" style="left:2341px;top:838.0px;width:51px;height:30px;border:1.3px solid #6b6b8a;border-radius:4px;background:#fff"></div>
<div class="a" style="left:2354px;top:844.5px;font-size:12px;line-height:16px;color:#5b5fa0">审核</div>
<svg class="a chev2" style="left:1597px;top:847.5px" width="9" height="10" viewBox="0 0 9 10"><path d="M0.6 1 L4.5 4.6 L8.4 1 M0.6 4.6 L4.5 8.2 L8.4 4.6" fill="none" stroke="#5865b8" stroke-width="1.3"/></svg>
<div class="a row" style="left:315px;top:894px;width:2130px;height:61px;background:#fff;border-radius:4px;box-shadow:0 2px 3px rgba(0,0,0,.075)"></div>
<div class="a" style="left:329px;top:916.0px;width:16.5px;height:16.5px;border:1.8px solid #b8b8b8;border-radius:2px;background:#fff"></div>
<div class="a" style="left:399.5px;top:915.0px;font-size:14.5px;line-height:18px;color:#53575d;letter-spacing:0.4px;">89</div>
<div class="a" style="left:472.5px;top:915.0px;font-size:14.5px;line-height:18px;color:#53575d;letter-spacing:0.4px;">7032</div>
<div class="a" style="left:555.5px;top:915.0px;font-size:14.5px;line-height:18px;color:#53575d;letter-spacing:0.4px;">555666888</div>
<div class="a" style="left:949px;top:915.0px;font-size:14.5px;line-height:18px;color:#53575d;">USDT</div>
<div class="a" style="left:1037.5px;top:915.0px;font-size:14.5px;line-height:18px;color:#53575d;letter-spacing:0.4px;">400.00000000</div>
<div class="a" style="left:1282px;top:914.0px;width:64px;height:23px;background:#5b6ac9;border-radius:3px"></div>
<div class="a" style="left:1288.5px;top:916.0px;font-size:12.5px;line-height:17px;color:#fff;font-weight:bold">账户资产</div>
<div class="a" style="left:1415px;top:915.0px;font-size:14.5px;line-height:18px;color:#53575d;">TQ1zh2bj8apbT75Avz5s...</div>
<div class="a" style="left:1902.5px;top:915.0px;font-size:14.5px;line-height:18px;color:#53575d;">在线</div>
<div class="a" style="left:2078.5px;top:915.0px;font-size:14.5px;line-height:18px;color:#53575d;letter-spacing:0.4px;">2022-10-02 15:13:17</div>
<div class="a" style="left:2341px;top:910.0px;width:51px;height:30px;border:1.3px solid #6b6b8a;border-radius:4px;background:#fff"></div>
<div class="a" style="left:2354px;top:916.5px;font-size:12px;line-height:16px;color:#5b5fa0">审核</div>
<svg class="a chev2" style="left:1597px;top:919.5px" width="9" height="10" viewBox="0 0 9 10"><path d="M0.6 1 L4.5 4.6 L8.4 1 M0.6 4.6 L4.5 8.2 L8.4 4.6" fill="none" stroke="#5865b8" stroke-width="1.3"/></svg>
<div class="a row" style="left:315px;top:966px;width:2130px;height:62px;background:#fff;border-radius:4px;box-shadow:0 2px 3px rgba(0,0,0,.075)"></div>
<div class="a" style="left:329px;top:988.5px;width:16.5px;height:16.5px;border:1.8px solid #b8b8b8;border-radius:2px;background:#fff"></div>
<div class="a" style="left:399.5px;top:987.5px;font-size:14.5px;line-height:18px;color:#53575d;letter-spacing:0.4px;">88</div>
<div class="a" style="left:472.5px;top:987.5px;font-size:14.5px;line-height:18px;color:#53575d;letter-spacing:0.4px;">7032</div>
<div class="a" style="left:555.5px;top:987.5px;font-size:14.5px;line-height:18px;color:#53575d;letter-spacing:0.4px;">555666888</div>
<div class="a" style="left:949px;top:987.5px;font-size:14.5px;line-height:18px;color:#53575d;">USDT</div>
<div class="a" style="left:1037.5px;top:987.5px;font-size:14.5px;line-height:18px;color:#53575d;letter-spacing:0.4px;">500.00000000</div>
<div class="a" style="left:1282px;top:986.5px;width:64px;height:23px;background:#5b6ac9;border-radius:3px"></div>
<div class="a" style="left:1288.5px;top:988.5px;font-size:12.5px;line-height:17px;color:#fff;font-weight:bold">账户资产</div>
<div class="a" style="left:1415px;top:987.5px;font-size:14.5px;line-height:18px;color:#53575d;">TQ1zh2bj8apbT75Avz5s...</div>
<div class="a" style="left:1902.5px;top:987.5px;font-size:14.5px;line-height:18px;color:#53575d;">在线</div>
<div class="a" style="left:2078.5px;top:987.5px;font-size:14.5px;line-height:18px;color:#53575d;letter-spacing:0.4px;">2022-10-02 15:13:08</div>
<div class="a" style="left:2341px;top:982.5px;width:51px;height:30px;border:1.3px solid #6b6b8a;border-radius:4px;background:#fff"></div>
<div class="a" style="left:2354px;top:989.0px;font-size:12px;line-height:16px;color:#5b5fa0">审核</div>
<svg class="a chev2" style="left:1597px;top:992.0px" width="9" height="10" viewBox="0 0 9 10"><path d="M0.6 1 L4.5 4.6 L8.4 1 M0.6 4.6 L4.5 8.2 L8.4 4.6" fill="none" stroke="#5865b8" stroke-width="1.3"/></svg>
<div class="a row" style="left:315px;top:1038.5px;width:2130px;height:61.5px;background:#fff;border-radius:4px;box-shadow:0 2px 3px rgba(0,0,0,.075)"></div>
<div class="a" style="left:329px;top:1060.75px;width:16.5px;height:16.5px;border:1.8px solid #b8b8b8;border-radius:2px;background:#fff"></div>
<div class="a" style="left:399.5px;top:1059.75px;font-size:14.5px;line-height:18px;color:#53575d;letter-spacing:0.4px;">87</div>
<div class="a" style="left:472.5px;top:1059.75px;font-size:14.5px;line-height:18px;color:#53575d;letter-spacing:0.4px;">7032</div>
<div class="a" style="left:555.5px;top:1059.75px;font-size:14.5px;line-height:18px;color:#53575d;letter-spacing:0.4px;">555666888</div>
<div class="a" style="left:949px;top:1059.75px;font-size:14.5px;line-height:18px;color:#53575d;">USDT</div>
<div class="a" style="left:1037.5px;top:1059.75px;font-size:14.5px;line-height:18px;color:#53575d;letter-spacing:0.4px;">10000.00000000</div>
<div class="a" style="left:1282px;top:1058.75px;width:64px;height:23px;background:#5b6ac9;border-radius:3px"></div>
<div class="a" style="left:1288.5px;top:1060.75px;font-size:12.5px;line-height:17px;color:#fff;font-weight:bold">账户资产</div>
<div class="a" style="left:1415px;top:1059.75px;font-size:14.5px;line-height:18px;color:#53575d;">TQ1zh2bj8apbT75Avz5s...</div>
<div class="a" style="left:1902.5px;top:1059.75px;font-size:14.5px;line-height:18px;color:#53575d;">在线</div>
<div class="a" style="left:2078.5px;top:1059.75px;font-size:14.5px;line-height:18px;color:#53575d;letter-spacing:0.4px;">2022-10-01 20:49:43</div>
<div class="a" style="left:2341px;top:1054.75px;width:51px;height:30px;border:1.3px solid #6b6b8a;border-radius:4px;background:#fff"></div>
<div class="a" style="left:2354px;top:1061.25px;font-size:12px;line-height:16px;color:#5b5fa0">审核</div>
<svg class="a chev2" style="left:1597px;top:1064.25px" width="9" height="10" viewBox="0 0 9 10"><path d="M0.6 1 L4.5 4.6 L8.4 1 M0.6 4.6 L4.5 8.2 L8.4 4.6" fill="none" stroke="#5865b8" stroke-width="1.3"/></svg>
<div class="a row" style="left:315px;top:1111px;width:2130px;height:61px;background:#fff;border-radius:4px;box-shadow:0 2px 3px rgba(0,0,0,.075)"></div>
<div class="a" style="left:329px;top:1133.0px;width:16.5px;height:16.5px;border:1.8px solid #b8b8b8;border-radius:2px;background:#fff"></div>
<div class="a" style="left:399.5px;top:1132.0px;font-size:14.5px;line-height:18px;color:#53575d;letter-spacing:0.4px;">69</div>
<div class="a" style="left:472.5px;top:1132.0px;font-size:14.5px;line-height:18px;color:#53575d;letter-spacing:0.4px;">7032</div>
<div class="a" style="left:555.5px;top:1132.0px;font-size:14.5px;line-height:18px;color:#53575d;letter-spacing:0.4px;">555666888</div>
<div class="a" style="left:949px;top:1132.0px;font-size:14.5px;line-height:18px;color:#53575d;">USDT</div>
<div class="a" style="left:1037.5px;top:1132.0px;font-size:14.5px;line-height:18px;color:#53575d;letter-spacing:0.4px;">20000.00000000</div>
<div class="a" style="left:1282px;top:1131.0px;width:64px;height:23px;background:#5b6ac9;border-radius:3px"></div>
<div class="a" style="left:1288.5px;top:1133.0px;font-size:12.5px;line-height:17px;color:#fff;font-weight:bold">账户资产</div>
<div class="a" style="left:1415px;top:1132.0px;font-size:14.5px;line-height:18px;color:#53575d;letter-spacing:-0.19px;">899AuTBFJWo1Rx1aoBxS...</div>
<div class="a" style="left:1902.5px;top:1132.0px;font-size:14.5px;line-height:18px;color:#53575d;">在线</div>
<div class="a" style="left:2078.5px;top:1132.0px;font-size:14.5px;line-height:18px;color:#53575d;letter-spacing:0.4px;">2022-09-13 16:09:44</div>
<div class="a" style="left:2341px;top:1127.0px;width:51px;height:30px;border:1.3px solid #6b6b8a;border-radius:4px;background:#fff"></div>
<div class="a" style="left:2354px;top:1133.5px;font-size:12px;line-height:16px;color:#5b5fa0">审核</div>
<svg class="a chev2" style="left:1608px;top:1136.5px" width="9" height="10" viewBox="0 0 9 10"><path d="M0.6 1 L4.5 4.6 L8.4 1 M0.6 4.6 L4.5 8.2 L8.4 4.6" fill="none" stroke="#5865b8" stroke-width="1.3"/></svg>
<div class="a row" style="left:315px;top:1183px;width:2130px;height:62px;background:#fff;border-radius:4px;box-shadow:0 2px 3px rgba(0,0,0,.075)"></div>
<div class="a" style="left:329px;top:1205.5px;width:16.5px;height:16.5px;border:1.8px solid #b8b8b8;border-radius:2px;background:#fff"></div>
<div class="a" style="left:399.5px;top:1204.5px;font-size:14.5px;line-height:18px;color:#53575d;letter-spacing:0.4px;">60</div>
<div class="a" style="left:472.5px;top:1204.5px;font-size:14.5px;line-height:18px;color:#53575d;letter-spacing:0.4px;">7032</div>
<div class="a" style="left:555.5px;top:1204.5px;font-size:14.5px;line-height:18px;color:#53575d;letter-spacing:0.4px;">555666888</div>
<div class="a" style="left:949px;top:1204.5px;font-size:14.5px;line-height:18px;color:#53575d;">USDT</div>
<div class="a" style="left:1037.5px;top:1204.5px;font-size:14.5px;line-height:18px;color:#53575d;letter-spacing:0.4px;">9999999.00000000</div>
<div class="a" style="left:1282px;top:1203.5px;width:64px;height:23px;background:#5b6ac9;border-radius:3px"></div>
<div class="a" style="left:1288.5px;top:1205.5px;font-size:12.5px;line-height:17px;color:#fff;font-weight:bold">账户资产</div>
<div class="a" style="left:1415px;top:1204.5px;font-size:14.5px;line-height:18px;color:#53575d;letter-spacing:-0.36px;">123erceUfgccACYJaTx1...</div>
<div class="a" style="left:1902.5px;top:1204.5px;font-size:14.5px;line-height:18px;color:#53575d;">在线</div>
<div class="a" style="left:2078.5px;top:1204.5px;font-size:14.5px;line-height:18px;color:#53575d;letter-spacing:0.4px;">2022-08-03 20:41:40</div>
<div class="a" style="left:2341px;top:1199.5px;width:51px;height:30px;border:1.3px solid #6b6b8a;border-radius:4px;background:#fff"></div>
<div class="a" style="left:2354px;top:1206.0px;font-size:12px;line-height:16px;color:#5b5fa0">审核</div>
<svg class="a chev2" style="left:1588.5px;top:1209.0px" width="9" height="10" viewBox="0 0 9 10"><path d="M0.6 1 L4.5 4.6 L8.4 1 M0.6 4.6 L4.5 8.2 L8.4 4.6" fill="none" stroke="#5865b8" stroke-width="1.3"/></svg>
<div class="a row" style="left:315px;top:1256px;width:2130px;height:64px;background:#fff;border-radius:4px;box-shadow:0 2px 3px rgba(0,0,0,.075)"></div>
</body></html>
